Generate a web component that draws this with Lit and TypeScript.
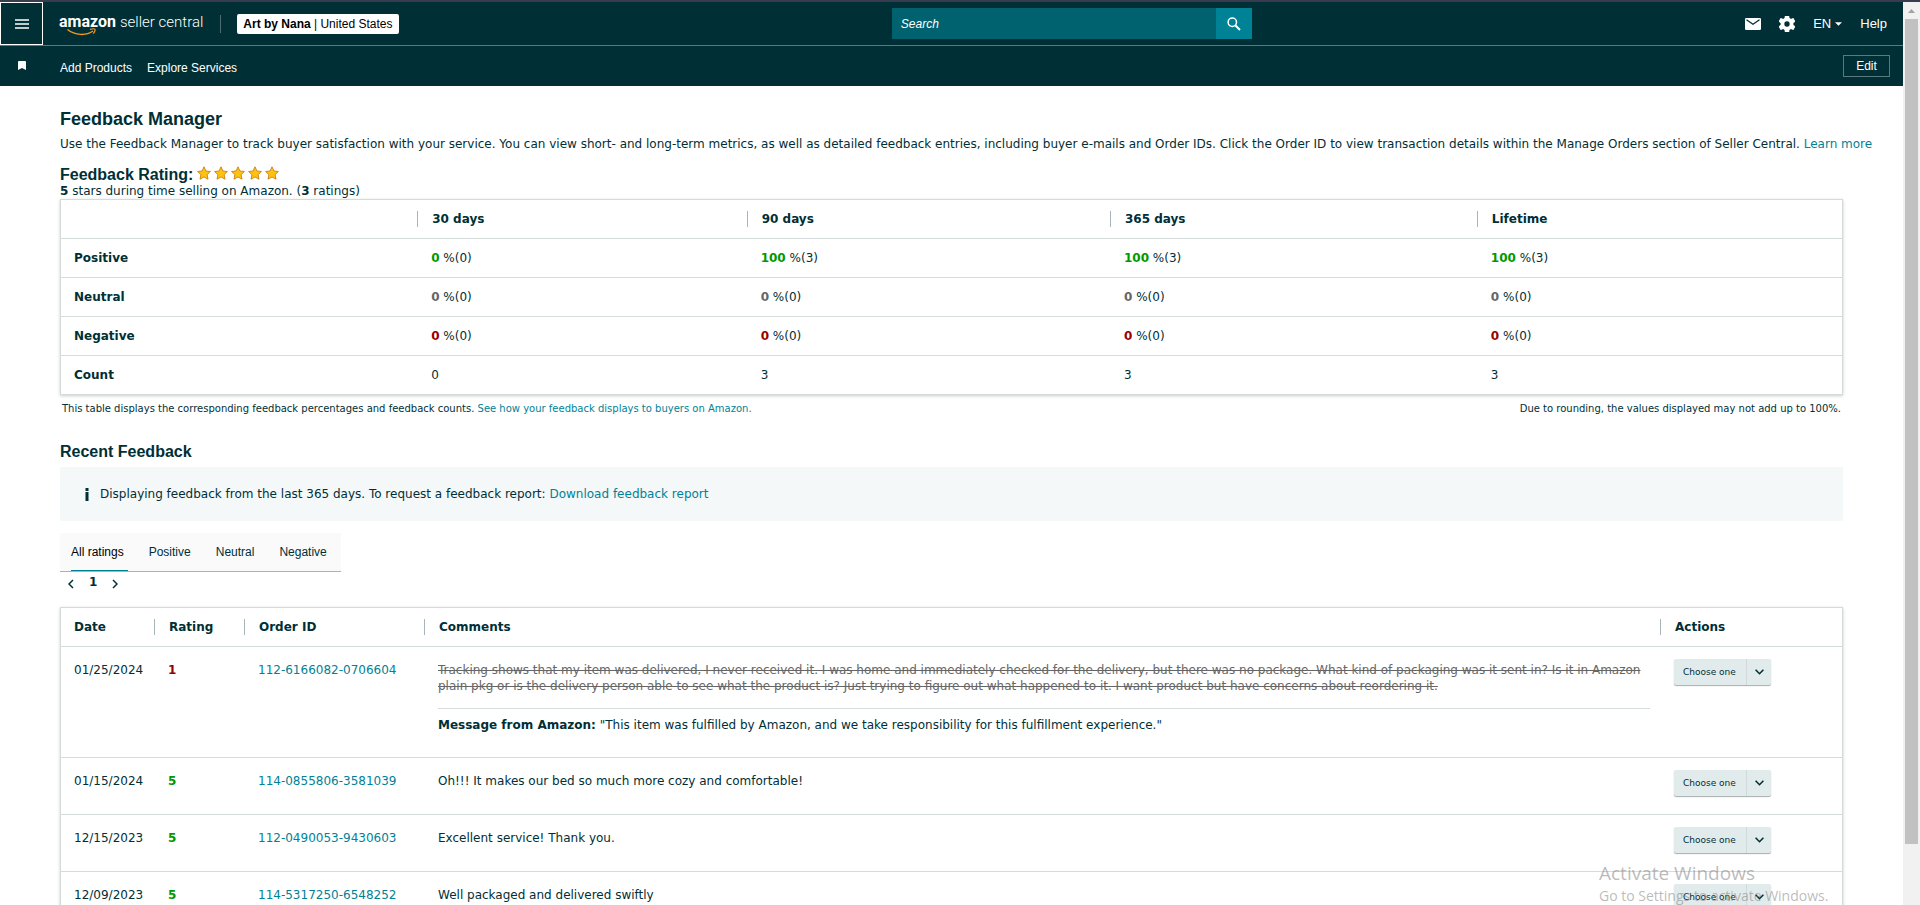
import { LitElement, html, css, svg, nothing } from "lit";
import { customElement, property, state } from "lit/decorators.js";

interface Share {
  percent: number;
  count: number;
}

interface Feedback {
  date: string;
  rating: number;
  order: string;
  comment: string;
  struck?: boolean;
  message?: string;
}

const PERIODS = ["30 days", "90 days", "365 days", "Lifetime"];

const SUMMARY: { label: string; tone: string; shares: Share[] }[] = [
  {
    label: "Positive",
    tone: "good",
    shares: [
      { percent: 0, count: 0 },
      { percent: 100, count: 3 },
      { percent: 100, count: 3 },
      { percent: 100, count: 3 },
    ],
  },
  { label: "Neutral", tone: "plain", shares: PERIODS.map(() => ({ percent: 0, count: 0 })) },
  { label: "Negative", tone: "bad", shares: PERIODS.map(() => ({ percent: 0, count: 0 })) },
];

const COUNTS = [0, 3, 3, 3];

const FEEDBACK: Feedback[] = [
  {
    date: "01/25/2024",
    rating: 1,
    order: "112-6166082-0706604",
    comment:
      "Tracking shows that my item was delivered, I never received it. I was home and immediately checked for the delivery, but there was no package. What kind of packaging was it sent in? Is it in Amazon plain pkg or is the delivery person able to see what the product is? Just trying to figure out what happened to it. I want product but have concerns about reordering it.",
    struck: true,
    message: "\"This item was fulfilled by Amazon, and we take responsibility for this fulfillment experience.\"",
  },
  {
    date: "01/15/2024",
    rating: 5,
    order: "114-0855806-3581039",
    comment: "Oh!!! It makes our bed so much more cozy and comfortable!",
  },
  { date: "12/15/2023", rating: 5, order: "112-0490053-9430603", comment: "Excellent service! Thank you." },
  { date: "12/09/2023", rating: 5, order: "114-5317250-6548252", comment: "Well packaged and delivered swiftly" },
];

@customElement("seller-header")
export class SellerHeader extends LitElement {
  static styles = css`
    :host {
      display: block;
      background: #002f36;
      color: #fff;
      font: 12px/16px "Liberation Sans", Arial, sans-serif;
    }
    a {
      color: inherit;
      text-decoration: none;
    }
    button {
      font: inherit;
      color: inherit;
      cursor: pointer;
    }
    svg {
      display: block;
    }
    .bar {
      display: flex;
      justify-content: space-between;
      align-items: center;
      height: 43px;
      border-bottom: 1px solid #5c7a7e;
    }
    .group {
      display: flex;
      align-items: center;
      height: 100%;
    }
    .menu {
      box-sizing: border-box;
      width: 43px;
      height: 100%;
      display: grid;
      place-items: center;
      padding: 0;
      background: none;
      border: 1px solid #fff;
    }
    .logo {
      position: relative;
      display: flex;
      align-items: baseline;
      gap: 4px;
      margin-left: 16px;
      font: 300 15px/20px Roboto, sans-serif;
      white-space: nowrap;
      padding-bottom: 3px;
    }
    .logo b {
      font-size: 16px;
      font-weight: 700;
    }
    .smile {
      position: absolute;
      left: 8px;
      top: 16px;
    }
    .rule {
      width: 1px;
      height: 18px;
      margin: 0 16px 0 17px;
      background: #4d6d72;
    }
    .account {
      height: 20px;
      padding: 0 6px;
      border: 0;
      border-radius: 2px;
      background: #fff;
      color: #000;
    }
    .search {
      display: flex;
      width: 360px;
      height: 31px;
    }
    .search input {
      flex: 1;
      min-width: 0;
      padding: 0 9px;
      border: 0;
      outline: 0;
      background: #00626f;
      color: #fff;
      font: italic 12px "Liberation Sans", Arial, sans-serif;
    }
    .search input::placeholder {
      color: #fff;
      opacity: 1;
    }
    .search button {
      width: 36px;
      padding: 0;
      display: grid;
      place-items: center;
      border: 0;
      background: #008296;
    }
    .tools {
      gap: 18px;
      padding-right: 16px;
      font-size: 13px;
    }
    .tools a,
    .tools button {
      display: flex;
      align-items: center;
      gap: 4px;
      padding: 0;
      border: 0;
      background: none;
    }
    .shortcuts {
      display: flex;
      align-items: center;
      height: 40px;
    }
    .mark {
      width: 43px;
      display: grid;
      place-items: center;
      padding-bottom: 2px;
    }
    .links {
      flex: 1;
      display: flex;
      gap: 15px;
      margin-left: 17px;
      padding-top: 4px;
    }
    .edit {
      width: 47px;
      height: 22px;
      margin-right: 13px;
      padding: 0;
      background: none;
      border: 1px solid #5c7a7e;
    }
  `;

  render() {
    return html`
      <header class="bar">
        <div class="group">
          <button class="menu" aria-label="Menu">
            <svg width="14" height="10" viewBox="0 0 14 10" fill="none" stroke="#fff" stroke-width="1.4">
              <path d="M0 1h14M0 5h14M0 9h14" />
            </svg>
          </button>
          <a class="logo" href="#home"
            ><b>amazon</b><span>seller central</span>
            <svg class="smile" width="30" height="8" viewBox="0 0 30 8" fill="none" stroke="#f7981d">
              <path d="M0.500 1.500C8 7.500 19 8 26 3" stroke-width="1.500" />
              <path d="M23 1.400c2.500-.7 4.800-.6 5 0 .2.900-.5 3-1.800 4.300" stroke-width="1.200" />
            </svg>
          </a>
          <span class="rule"></span>
          <button class="account"><b>Art by Nana</b> | United States</button>
        </div>
        <form class="search" role="search" @submit=${(e: Event) => e.preventDefault()}>
          <input type="text" placeholder="Search" aria-label="Search" />
          <button aria-label="Run search">
            <svg width="14" height="14" viewBox="0 0 14 14" fill="none" stroke="#fff">
              <circle cx="5.300" cy="5.300" r="4.200" stroke-width="1.500" />
              <path d="M8.500 8.500l4.500 4.500" stroke-width="2" />
            </svg>
          </button>
        </form>
        <div class="group tools">
          <a href="#messages" aria-label="Messages">
            <svg width="16" height="12" viewBox="0 0 16 12">
              <rect width="16" height="12" rx="1.300" fill="#fff" />
              <path d="M1.500 1.800L8 6.300l6.500-4.500" fill="none" stroke="#002f36" stroke-width="1.300" />
            </svg>
          </a>
          <a href="#settings" aria-label="Settings">
            <svg width="16" height="16" viewBox="3 3 18 18" fill="#fff">
              <path
                d="M19.140 12.940c.04-.3.060-.61.060-.94 0-.32-.02-.64-.07-.94l2.030-1.580c.18-.14.230-.41.120-.61l-1.920-3.320c-.12-.22-.37-.29-.59-.22l-2.390.96c-.5-.38-1.030-.7-1.620-.94l-.36-2.540c-.04-.24-.24-.41-.48-.41h-3.840c-.24 0-.43.170-.47.410l-.36 2.540c-.59.240-1.130.570-1.620.940l-2.390-.96c-.22-.08-.47 0-.59.220L2.740 8.870c-.12.210-.08.470.120.610l2.030 1.580c-.05.300-.09.630-.09.940s.02.640.07.940l-2.030 1.580c-.18.140-.23.410-.12.610l1.920 3.320c.12.220.37.290.59.220l2.390-.96c.5.380 1.030.7 1.620.94l.36 2.540c.05.240.24.410.48.410h3.840c.24 0 .44-.17.470-.41l.36-2.540c.59-.24 1.130-.56 1.620-.94l2.390.96c.22.080.47 0 .59-.22l1.920-3.320c.12-.22.070-.47-.12-.61l-2.010-1.580zM12 15a3 3 0 1 1 0-6 3 3 0 0 1 0 6z"
              />
            </svg>
          </a>
          <button>
            EN
            <svg width="7" height="4" viewBox="0 0 8 4" fill="#fff"><path d="M0 0h8L4 4z" /></svg>
          </button>
          <a href="#help">Help</a>
        </div>
      </header>
      <nav class="shortcuts">
        <span class="mark">
          <svg width="8" height="9" viewBox="0 0 8 9" fill="#fff"><path d="M1 0h6q1 0 1 1v8L4 7 0 9V1q0-1 1-1z" /></svg>
        </span>
        <div class="links">
          <a href="#add">Add Products</a>
          <a href="#explore">Explore Services</a>
        </div>
        <button class="edit">Edit</button>
      </nav>
    `;
  }
}

@customElement("action-select")
export class ActionSelect extends LitElement {
  static styles = css`
    :host {
      display: block;
      width: 97px;
    }
    .box {
      display: grid;
      grid-template-columns: 1fr 25px;
      height: 26px;
      border-radius: 2px;
      background: #e2ebec;
      box-shadow: 0 1px 1px rgba(0, 20, 20, 0.35);
    }
    select {
      grid-area: 1 / 1 / 2 / 3;
      appearance: none;
      border: 0;
      margin: 0;
      padding: 0 0 0 9px;
      background: none;
      color: #002f36;
      font: 9px/12px "DejaVu Sans", Verdana, sans-serif;
    }
    .arrow {
      grid-area: 1 / 2 / 2 / 3;
      display: grid;
      place-items: center;
      border-left: 1px solid #d0dadb;
      pointer-events: none;
    }
  `;

  @property() order = "";

  render() {
    return html`
      <div class="box">
        <select aria-label=${`Action for order ${this.order}`}>
          <option>Choose one</option>
        </select>
        <span class="arrow">
          <svg width="9" height="6" viewBox="0 0 9 6" fill="none" stroke="#002f36" stroke-width="1.600">
            <path d="M0.600 0.800l3.900 3.900L8.400 0.800" />
          </svg>
        </span>
      </div>
    `;
  }
}

@customElement("app-root")
export class AppRoot extends LitElement {
  static styles = css`
    :host {
      display: grid;
      grid-template: 2px minmax(0, 1fr) / minmax(0, 1fr) 17px;
      position: relative;
      height: 100vh;
      overflow: hidden;
      background: #fff;
      color: #002f36;
      font: 12px/16px "DejaVu Sans", Verdana, sans-serif;
    }
    a {
      color: #008296;
      text-decoration: none;
    }
    .edge {
      grid-column: 1 / 3;
      background: #373d4e;
    }
    .page {
      overflow: hidden;
    }
    .scroll {
      display: flex;
      flex-direction: column;
      align-items: center;
      background: #f1f1f1;
    }
    .scroll svg {
      flex: none;
    }
    .thumb {
      width: 13px;
      height: 91.400%;
      background: #c1c1c1;
    }
    main {
      padding: 22px 60px 0;
    }
    h1,
    h2 {
      margin: 0;
      font: bold 18px/22px "Liberation Sans", Arial, sans-serif;
    }
    h2 {
      font-size: 16px;
      line-height: 20px;
    }
    p {
      margin: 0;
    }
    .intro {
      margin: 6px -48px 14px 0;
    }
    .rating {
      display: flex;
      align-items: center;
      gap: 4px;
      height: 18px;
    }
    .stars {
      display: block;
      margin-bottom: 4px;
    }
    .score {
      line-height: 15px;
    }
    table {
      width: 100%;
      table-layout: fixed;
      border-collapse: separate;
      border-spacing: 0;
      border: 1px solid #d5dbdb;
      box-shadow: 0 1px 3px rgba(0, 30, 30, 0.22);
    }
    th,
    td {
      padding: 0 14px;
      text-align: left;
      vertical-align: top;
    }
    th:first-child,
    td:first-child {
      padding-left: 13px;
    }
    tbody th,
    tbody td {
      border-top: 1px solid #d5dbdb;
    }
    thead th {
      height: 38px;
      padding-left: 0;
      vertical-align: middle;
    }
    .head {
      display: block;
      padding-left: 14px;
      border-left: 1px solid #a6b5b7;
    }
    .summary tbody th,
    .summary tbody td {
      height: 38px;
      vertical-align: middle;
    }
    .good {
      color: #090;
    }
    .bad {
      color: #900;
    }
    .plain {
      color: #666;
    }
    .notes {
      display: flex;
      justify-content: space-between;
      padding: 6px 2px 0;
      font-size: 10px;
    }
    .recent {
      margin-top: 25px;
    }
    .info {
      display: flex;
      align-items: center;
      gap: 11px;
      height: 54px;
      margin: 5px 0 12px;
      padding-left: 25px;
      background: #f4f8f9;
    }
    .tabs {
      display: inline-flex;
      gap: 21px;
      padding: 0 10px 0 11px;
      background: #fafafa;
      border-bottom: 1px solid #a9b3b3;
    }
    .tab {
      height: 38px;
      padding: 0 4px 0 0;
      border: 0;
      background: none;
      color: #002f36;
      font: 12px "Liberation Sans", Arial, sans-serif;
    }
    .tab[aria-selected="true"] {
      box-shadow: inset 0 -1px #008296;
      color: #000;
    }
    .pager {
      display: flex;
      align-items: center;
      gap: 15px;
      height: 20px;
      margin: 0 0 15px 8px;
    }
    .pager button {
      display: grid;
      padding: 4px 0 0;
      border: 0;
      background: none;
    }
    .feedback td {
      padding: 15px 10px 24px 14px;
    }
    .feedback td:first-child {
      padding-left: 13px;
    }
    .feedback .action {
      padding: 12px 0 18px 14px;
    }
    .struck {
      color: #666;
      text-decoration: line-through;
    }
    .message {
      margin-top: 14px;
      padding-top: 8px;
      border-top: 1px solid #d5dbdb;
    }
    .watermark {
      position: absolute;
      right: 85px;
      bottom: -3px;
      width: 236px;
      font: 14px/24px "Open Sans", sans-serif;
      color: rgba(120, 120, 120, 0.5);
      white-space: nowrap;
      pointer-events: none;
    }
    .watermark strong {
      display: block;
      font-weight: 400;
      font-size: 19px;
      line-height: 22px;
    }
  `;

  @state() private tab = "All ratings";

  private star(x: number) {
    return svg`<path transform="translate(${x} 0)" d="M7 .8l1.900 4.200 4.500.5-3.300 3.100.9 4.600L7 10.900 3 13.200l.9-4.600L.6 5.500 5.100 5z" fill="#ffc20e" stroke="#cf8a1c" stroke-width="1" />`;
  }

  private chevron(path: string) {
    return html`<svg width="6" height="10" viewBox="0 0 6 10" fill="none" stroke="#002f36" stroke-width="1.500"><path d=${path} /></svg>`;
  }

  render() {
    return html`
      <div class="edge"></div>
      <div class="page">
        <seller-header></seller-header>
        <main>
          <h1>Feedback Manager</h1>
          <p class="intro">
            Use the Feedback Manager to track buyer satisfaction with your service. You can view short- and long-term
            metrics, as well as detailed feedback entries, including buyer e-mails and Order IDs. Click the Order ID to
            view transaction details within the Manage Orders section of Seller Central.
            <a href="#learn">Learn more</a>
          </p>
          <div class="rating">
            <h2>Feedback Rating:</h2>
            <svg class="stars" width="82" height="14" viewBox="0 0 82 14" role="img" aria-label="5 stars">
              ${[0, 17, 34, 51, 68].map((x) => this.star(x))}
            </svg>
          </div>
          <p class="score"><b>5</b> stars during time selling on Amazon. (<b>3</b> ratings)</p>
          <table class="summary">
            <colgroup>
              <col style="width:20%" />
              <col style="width:18.500%" />
              <col style="width:20.400%" />
              <col style="width:20.600%" />
              <col />
            </colgroup>
            <thead>
              <tr>
                <th></th>
                ${PERIODS.map((p) => html`<th scope="col"><span class="head">${p}</span></th>`)}
              </tr>
            </thead>
            <tbody>
              ${SUMMARY.map(
                (row) => html`<tr>
                  <th scope="row">${row.label}</th>
                  ${row.shares.map((s) => html`<td><b class=${row.tone}>${s.percent}</b> %(${s.count})</td>`)}
                </tr>`,
              )}
              <tr>
                <th scope="row">Count</th>
                ${COUNTS.map((c) => html`<td>${c}</td>`)}
              </tr>
            </tbody>
          </table>
          <div class="notes">
            <span
              >This table displays the corresponding feedback percentages and feedback counts.
              <a href="#display">See how your feedback displays to buyers on Amazon.</a></span
            >
            <span>Due to rounding, the values displayed may not add up to 100%.</span>
          </div>
          <h2 class="recent">Recent Feedback</h2>
          <div class="info">
            <svg width="4" height="13" viewBox="0 0 4 13" fill="#002f36">
              <path d="M0.500 0h3v3h-3zM0.500 4h3v9h-3z" />
            </svg>
            <span
              >Displaying feedback from the last 365 days. To request a feedback report:
              <a href="#report">Download feedback report</a></span
            >
          </div>
          <div class="tabs" role="tablist">
            ${["All ratings", "Positive", "Neutral", "Negative"].map(
              (t) =>
                html`<button
                  class="tab"
                  role="tab"
                  aria-selected=${t === this.tab ? "true" : "false"}
                  @click=${() => (this.tab = t)}
                >
                  ${t}
                </button>`,
            )}
          </div>
          <div class="pager">
            <button aria-label="Previous page">${this.chevron("M5 1L1 5l4 4")}</button>
            <b>1</b>
            <button aria-label="Next page">${this.chevron("M1 1l4 4-4 4")}</button>
          </div>
          <table class="feedback">
            <colgroup>
              <col style="width:93px" />
              <col style="width:90px" />
              <col style="width:180px" />
              <col />
              <col style="width:182px" />
            </colgroup>
            <thead>
              <tr>
                <th scope="col">Date</th>
                ${["Rating", "Order ID", "Comments", "Actions"].map(
                  (h) => html`<th scope="col"><span class="head">${h}</span></th>`,
                )}
              </tr>
            </thead>
            <tbody>
              ${FEEDBACK.map(
                (f) => html`<tr>
                  <td>${f.date}</td>
                  <td><b class=${f.rating > 3 ? "good" : "bad"}>${f.rating}</b></td>
                  <td><a href="#${f.order}">${f.order}</a></td>
                  <td>
                    <div class=${f.struck ? "struck" : "comment"}>${f.comment}</div>
                    ${f.message
                      ? html`<div class="message"><b>Message from Amazon:</b> ${f.message}</div>`
                      : nothing}
                  </td>
                  <td class="action"><action-select order=${f.order}></action-select></td>
                </tr>`,
              )}
            </tbody>
          </table>
        </main>
      </div>
      <div class="scroll">
        <svg width="17" height="17" viewBox="0 0 17 17" fill="#a3a3a3"><path d="M5 11l3.500-4 3.500 4z" /></svg>
        <div class="thumb"></div>
      </div>
      <div class="watermark"><strong>Activate Windows</strong>Go to Settings to activate Windows.</div>
    `;
  }
}
